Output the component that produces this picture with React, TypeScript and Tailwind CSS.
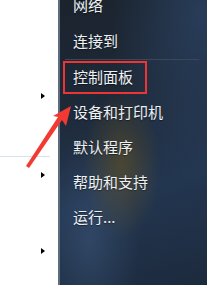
const items = ["设备和打印机", "默认程序", "帮助和支持", "运行..."];

function Caret() {
  return <div className="ml-[41px] h-0 w-0 border-y-[3.5px] border-l-[4px] border-y-transparent border-l-black" />;
}

export default function App() {
  return (
    <div
      className="relative flex h-[285px] w-[207px] overflow-hidden bg-white"
      style={{ fontFamily: '"Noto Sans CJK SC", "Noto Sans", sans-serif' }}
    >
      {/* left list (white) */}
      <div className="flex w-[58px] shrink-0 flex-col">
        <div className="h-[93px]" />
        <Caret />
        <div className="h-[57px]" />
        <div className="h-px w-[50px] bg-[#d6e4f2]" />
        <div className="h-[15px]" />
        <Caret />
        <div className="h-[70px]" />
        <Caret />
      </div>

      {/* right column of start menu */}
      <div className="flex flex-1 flex-col border-l-2 border-[#5d6d80] bg-[radial-gradient(ellipse_at_42%_58%,rgba(115,90,30,0.5),transparent_32%),radial-gradient(ellipse_at_95%_5%,rgba(45,70,105,0.7),transparent_45%),radial-gradient(ellipse_at_20%_85%,rgba(70,100,140,0.4),transparent_30%),linear-gradient(165deg,#1b232d_0%,#1e2a39_35%,#233650_65%,#1c2a3d_100%)] text-[15px] text-[#eef1f4] [text-shadow:0_1px_1px_rgba(0,0,0,0.45)]">
        <div className="mt-[-13px] flex h-[36px] shrink-0 items-center pl-[13px]">网络</div>
        <div className="flex h-[36px] shrink-0 items-center pl-[13px]">连接到</div>
        <div className="ml-[5px] h-px w-[134px] shrink-0 bg-[#3a4757]" />
        <div className="relative flex h-[35px] shrink-0 items-center pl-[13px]">
          控制面板
          <div className="absolute left-[3px] top-px h-[33px] w-[84px] border-[2.5px] border-[#f03434]" />
        </div>
        {items.map((t) => (
          <div key={t} className="flex h-[35px] shrink-0 items-center pl-[13px]">
            {t}
          </div>
        ))}
      </div>

      {/* red annotation arrow */}
      <svg className="absolute left-0 top-0" width="207" height="285" viewBox="0 0 207 285">
        <polygon points="71,106 66,126 62,120 29,168 26,166 58,117 53,116" fill="#f23a32" />
      </svg>
    </div>
  );
}
